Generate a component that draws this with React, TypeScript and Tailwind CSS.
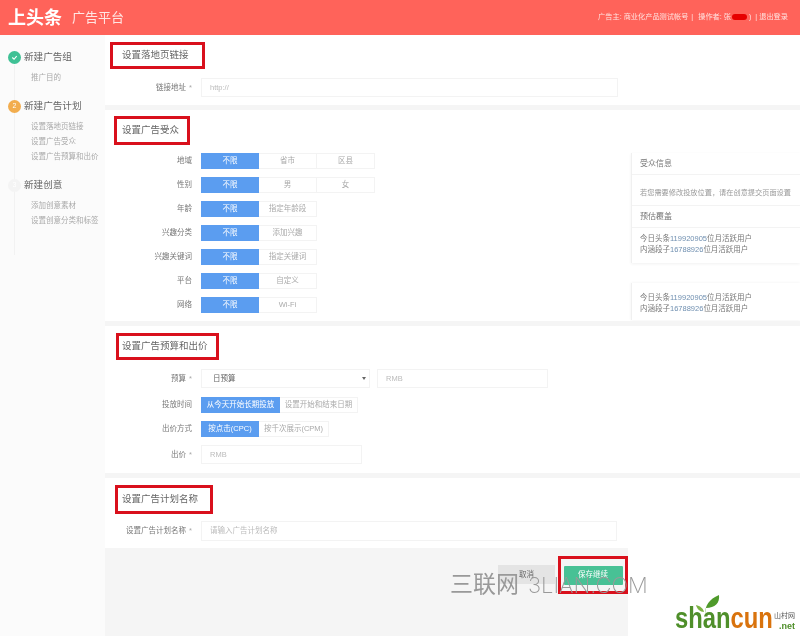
const F = "font-['Liberation_Sans','Noto_Sans_CJK_SC',sans-serif]";

function Step({ icon, title, items }: { icon: React.ReactNode; title: string; items: string[] }) {
  return (
    <div className="flex flex-col">
      <div className="flex h-4 items-center gap-[3px]">
        {icon}
        <span className="text-[9.6px] text-[#666]">{title}</span>
      </div>
      <div className="mt-[4.5px] flex flex-col pl-[23px]">
        {items.map((t) => (
          <div key={t} className="h-[15px] whitespace-nowrap text-[7.5px] leading-[15px] text-[#aaa]">{t}</div>
        ))}
      </div>
    </div>
  );
}

function Heading({ text, className }: { text: string; className: string }) {
  return (
    <div className={`flex items-center border-[3px] border-[#d9101c] text-[9.5px] text-[#666] ${className}`}>{text}</div>
  );
}

function Label({ text, req }: { text: string; req?: boolean }) {
  return (
    <div className="w-[91px] shrink-0 pr-[9px] text-right text-[7.5px] text-[#777]">
      {text}
      {req && <span className="ml-[1px] text-[#aaa]"> *</span>}
    </div>
  );
}

function Seg({ label, opts, wide }: { label: string; opts: string[]; wide?: boolean }) {
  return (
    <div className="flex h-4 items-center">
      <Label text={label} />
      <div className={`flex h-4 items-center justify-center bg-[#5b9df0] text-[7.5px] text-white ${wide ? "w-[79px]" : "w-[58px]"}`}>{opts[0]}</div>
      {opts.slice(1).map((o) => (
        <div key={o} className={`flex h-4 items-center justify-center border border-l-0 border-[#f3f3f3] text-[7.5px] text-[#aaa] ${wide ? "w-[78px]" : "w-[58px]"}`}>{o}</div>
      ))}
    </div>
  );
}

function Field({ text, className }: { text: string; className: string }) {
  return (
    <div className={`flex items-center border border-[#f3f3f3] bg-white pl-[8px] text-[7.5px] text-[#bbb] ${className}`}>{text}</div>
  );
}

function Stats() {
  return (
    <div className="text-[7.5px] leading-[10.5px] text-[#777]">
      <div>今日头条<span className="text-[#6f8fb0]">119920905</span>位月活跃用户</div>
      <div>内涵段子<span className="text-[#6f8fb0]">16788926</span>位月活跃用户</div>
    </div>
  );
}

export default function App() {
  return (
    <div className={`flex h-[636px] w-[800px] flex-col overflow-hidden bg-white blur-[0.35px] ${F}`}>
      <header className="flex h-[35px] shrink-0 items-center bg-[#ff635a] pl-[8px] pr-[12px] text-white">
        <span className="text-[18px] font-bold leading-none">上头条</span>
        <span className="ml-[10px] text-[13px] text-[#ffe6e3]">广告平台</span>
        <div className="ml-auto flex items-center text-[7.2px] text-[#ffe3e0]">
          <span>广告主: 商业化产品测试帐号</span>
          <span className="ml-[3px]">|</span>
          <span className="ml-[5px]">操作者: 张</span>
          <span className="ml-[1px] h-[6px] w-[15px] rounded-full bg-[#e60000]" />
          <span className="ml-[2px]">)</span>
          <span className="ml-[4px]">|</span>
          <span className="ml-[2px]">退出登录</span>
        </div>
      </header>

      <div className="flex min-h-0 flex-1">
        <aside className="relative flex w-[105px] shrink-0 flex-col gap-[13.5px] bg-[#fbfbfb] pl-[8px] pt-[14px]">
          <div className="absolute left-[14px] top-[30px] h-[190px] w-px bg-[#f2f2f2]" />
          <div className="relative">
            <Step
              icon={
                <span className="flex h-[13px] w-[13px] shrink-0 items-center justify-center rounded-full bg-[#3fc195]">
                  <svg width="7" height="7" viewBox="0 0 8 8" fill="none" stroke="white" strokeWidth="1.3"><path d="M1.5 4l2 2 3-3.5" /></svg>
                </span>
              }
              title="新建广告组"
              items={["推广目的"]}
            />
          </div>
          <div className="relative">
            <Step
              icon={<span className="flex h-[13px] w-[13px] shrink-0 items-center justify-center rounded-full bg-[#f2ad4e] text-[7px] text-white">2</span>}
              title="新建广告计划"
              items={["设置落地页链接", "设置广告受众", "设置广告预算和出价"]}
            />
          </div>
          <div className="relative">
            <Step
              icon={<span className="flex h-[13px] w-[13px] shrink-0 items-center justify-center rounded-full bg-[#f4f4f4] text-[7px] text-white">3</span>}
              title="新建创意"
              items={["添加创意素材", "设置创意分类和标签"]}
            />
          </div>
        </aside>

        <main className="flex min-w-0 flex-1 flex-col bg-white pt-[2px]">
          <section className="h-[68px] shrink-0 bg-white pl-[5px]">
            <Heading text="设置落地页链接" className="mt-[5px] h-[27px] w-[95px] pl-[9px]" />
            <div className="mt-[9px] flex items-center">
              <Label text="链接地址" req />
              <Field text="http://" className="h-[19px] w-[417px]" />
            </div>
          </section>

          <div className="h-[5px] shrink-0 bg-[#f5f5f5]" />

          <section className="flex h-[211px] shrink-0 bg-white">
            <div className="w-[526px] shrink-0 pl-[9px]">
              <Heading text="设置广告受众" className="mt-[6px] h-[29px] w-[76px] pl-[5px]" />
              <div className="mt-[8px] -ml-[4px] flex flex-col gap-[8px]">
                <Seg label="地域" opts={["不限", "省市", "区县"]} />
                <Seg label="性别" opts={["不限", "男", "女"]} />
                <Seg label="年龄" opts={["不限", "指定年龄段"]} />
                <Seg label="兴趣分类" opts={["不限", "添加兴趣"]} />
                <Seg label="兴趣关键词" opts={["不限", "指定关键词"]} />
                <Seg label="平台" opts={["不限", "自定义"]} />
                <Seg label="网络" opts={["不限", "Wi-Fi"]} />
              </div>
            </div>
            <div className="flex min-w-0 flex-1 flex-col pt-[43px]">
              <div className="flex h-[110px] flex-col border-l border-[#f0f0f0] pl-[8px] shadow-[0_1px_3px_rgba(0,0,0,0.06)] text-[#777]">
                <div className="flex h-[21px] shrink-0 items-center text-[8px]">受众信息</div>
                <div className="-ml-[8px] h-px bg-[#f3f3f3]" />
                <div className="flex h-[30px] shrink-0 items-center pt-[6px] text-[7.2px] whitespace-nowrap text-[#999]">若您需要修改投放位置，请在创意提交页面设置</div>
                <div className="-ml-[8px] h-px bg-[#f3f3f3]" />
                <div className="flex h-[21px] shrink-0 items-center text-[8px]">预估覆盖</div>
                <div className="-ml-[8px] h-px bg-[#f3f3f3]" />
                <div className="pt-[6px]"><Stats /></div>
              </div>
              <div className="mt-[20px] h-[37px] border-l border-[#f0f0f0] pl-[8px] pt-[10px] shadow-[0_0_3px_rgba(0,0,0,0.06)]">
                <Stats />
              </div>
            </div>
          </section>

          <div className="h-[5px] shrink-0 bg-[#f5f5f5]" />

          <section className="h-[147px] shrink-0 bg-white pl-[11px]">
            <Heading text="设置广告预算和出价" className="mt-[7px] h-[27px] w-[103px] pl-[3px]" />
            <div className="-ml-[6px] mt-[9px] flex flex-col">
              <div className="flex items-center">
                <Label text="预算" req />
                <div className="flex h-[19px] w-[169px] items-center justify-between border border-[#f3f3f3] pl-[11px] pr-[3px] text-[7.5px] text-[#666]">
                  <span>日预算</span>
                  <span className="h-0 w-0 border-x-[2px] border-t-[3px] border-x-transparent border-t-[#666]" />
                </div>
                <Field text="RMB" className="ml-[7px] h-[19px] w-[171px]" />
              </div>
              <div className="mt-[9px]"><Seg label="投放时间" opts={["从今天开始长期投放", "设置开始和结束日期"]} wide /></div>
              <div className="mt-[8px]">
                <div className="flex h-4 items-center">
                  <Label text="出价方式" />
                  <div className="flex h-4 w-[58px] items-center justify-center bg-[#5b9df0] text-[7.5px] text-white">按点击(CPC)</div>
                  <div className="flex h-4 w-[70px] items-center justify-center border border-l-0 border-[#f3f3f3] text-[7.5px] text-[#aaa]">按千次展示(CPM)</div>
                </div>
              </div>
              <div className="mt-[8px] flex items-center">
                <Label text="出价" req />
                <Field text="RMB" className="h-[19px] w-[161px]" />
              </div>
            </div>
          </section>

          <div className="h-[5px] shrink-0 bg-[#f5f5f5]" />

          <section className="h-[70px] shrink-0 bg-white pl-[10px]">
            <Heading text="设置广告计划名称" className="mt-[7px] h-[29px] w-[98px] pl-[4px]" />
            <div className="-ml-[5px] mt-[7px] flex items-center">
              <Label text="设置广告计划名称" req />
              <Field text="请输入广告计划名称" className="h-[20px] w-[416px]" />
            </div>
          </section>

          <div className="relative flex flex-1 items-start">
            <div className="flex h-full w-[523px] shrink-0 items-start justify-end bg-[#f5f5f5] pt-[8px]">
              <div className="mt-[9px] flex h-[19px] w-[57px] items-center justify-center bg-[#e4e4e4] text-[7.5px] text-[#666]">取消</div>
              <div className="ml-[3px] flex h-[38px] w-[70px] items-center justify-center border-[3px] border-[#d9101c]">
                <div className="flex h-[19px] w-[59px] items-center justify-center rounded-[1px] bg-[#48c195] text-[7.5px] text-white">保存继续</div>
              </div>
            </div>
            <div className="absolute left-[345px] top-[25px] flex items-center gap-[9px] whitespace-nowrap leading-none text-[#999]">
              <span className="text-[23px]">三联网</span>
              <span className="font-['Inter'] text-[22px] font-extralight">3LIAN.COM</span>
            </div>
            <div className="absolute bottom-[3px] right-[5px] flex items-end">
              <svg className="absolute left-[20px] -top-[10px]" width="26" height="22" viewBox="0 0 26 22">
                <path d="M10 20C10 12 14 5 24 1c1 8-4 13-13 13" fill="#4f9a2b" />
                <path d="M9 18C8 14 5 12 1 11c1 4 4 7 8 7" fill="#7cb342" />
              </svg>
              <span className="w-[93px] whitespace-nowrap text-[29px] font-bold leading-none">
                <span className="inline-block origin-left scale-x-[0.82]">
                  <span className="text-[#4f8f2a]">shan</span><span className="text-[#d9730d]">cun</span>
                </span>
              </span>
              <span className="mb-[2px] ml-[2px] flex w-[25px] flex-col items-end text-[7px] leading-[10px]">
                <span className="text-[#555]">山村网</span>
                <span className="text-[9px] font-bold text-[#4f8f2a]">.net</span>
              </span>
            </div>
          </div>
        </main>
      </div>
    </div>
  );
}
